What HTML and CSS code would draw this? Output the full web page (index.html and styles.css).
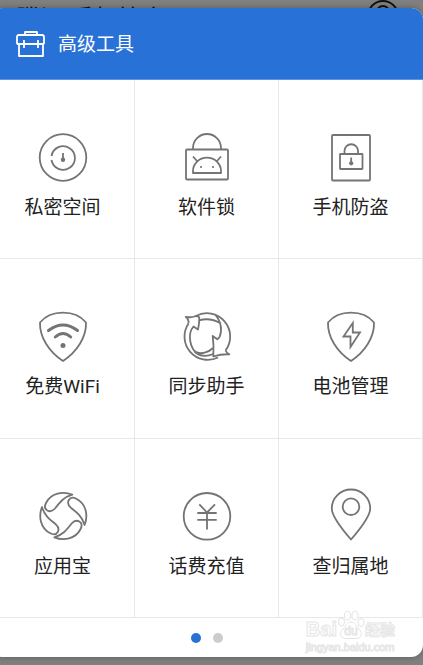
FILE: index.html
```html
<!DOCTYPE html>
<html lang="zh-CN">
<head>
<meta charset="utf-8">
<meta name="viewport" content="width=device-width, initial-scale=1">
<title>高级工具</title>
<link rel="stylesheet" href="styles.css">
</head>
<body>
<div class="backdrop">
  <span>腾讯 手机管家</span>
  <svg class="avatar" viewBox="0 0 32 32" aria-hidden="true"><circle cx="16" cy="16" r="15"/><circle cx="16" cy="12" r="6"/></svg>
</div>
<main class="panel">
  <header class="panel-header">
    <svg class="toolbox" viewBox="0 0 30 28" aria-hidden="true"><path d="M9 5V2H21V5M3 14H1.500L1 13V7Q1 5 3 5H26Q28 5 28 7V13L27.500 14H27M3 14H27V26H3ZM8 10V18M22 10V18"/></svg>
    <h1 class="title">高级工具</h1>
  </header>
  <nav class="grid">
    <a class="tile" href="#space">
      <svg class="icon" viewBox="0 0 56 56" aria-hidden="true"><circle cx="28" cy="28.500" r="23.300"/><path d="M16.500 27A11.800 11.800 0 1 1 16.500 31M28 24V31"/><circle class="solid" cx="28" cy="30.700" r="2.200"/></svg>
      <span class="label">私密空间</span>
    </a>
    <a class="tile" href="#lock">
      <svg class="icon" viewBox="0 0 56 56" aria-hidden="true"><path d="M14 20.500V19A14 14 0 0 1 42 19V20.500"/><rect x="7" y="20.500" width="42" height="30" rx="1"/><path d="M14 44V42A14 13.300 0 0 1 42 42V44ZM14 27.500L18 32M42 27.500L38 32"/><circle class="solid" cx="22" cy="38" r="1.100"/><circle class="solid" cx="34" cy="38" r="1.100"/></svg>
      <span class="label">软件锁</span>
    </a>
    <a class="tile" href="#antitheft">
      <svg class="icon" viewBox="0 0 56 56" aria-hidden="true"><rect x="9" y="6" width="38" height="45.500" rx="1"/><rect x="17" y="25" width="22.500" height="15" rx="0.500"/><path d="M21.500 25V22A6.700 6.700 0 0 1 35 22V25M28.200 28.500V34"/><circle class="solid" cx="28.200" cy="34.300" r="2.100"/></svg>
      <span class="label">手机防盗</span>
    </a>
    <a class="tile" href="#wifi">
      <svg class="icon" viewBox="0 0 56 56" aria-hidden="true"><path d="M28 4.700C38 4.700 46 8.500 51 14.500C51.500 29 42 44 28 53C14 44 4.500 29 5 14.500C10 8.500 18 4.700 28 4.700Z"/><path class="wave" d="M13.500 22.500Q28 11.500 42.500 22.500M20.300 29Q28 22 35.700 29"/><circle class="solid" cx="28" cy="37.500" r="2.500"/></svg>
      <span class="label">免费WiFi</span>
    </a>
    <a class="tile" href="#sync">
      <svg class="icon" viewBox="0 0 56 56" aria-hidden="true"><path d="M16.800 8A23.300 23.300 0 0 1 46.500 42.500M39 49.500A23.300 23.300 0 0 1 9.500 15.500M20.300 12.300C27 10.300 35 11.500 42 15.500M36 6.500C42 13 43.500 22 40.700 28.800M34.300 46C27 49 20 48 15.500 43.500M16 43.500C22 47 30 44 34 40"/><path d="M9.500 15.500Q10 11.500 6.800 8.800Q12 10 16.800 8Q19.500 8 20.300 9.500Q20.300 16 19 21.500L14.500 18.500C8 26 11.500 39 16 43.500M46.500 42.500Q47.500 45 50.300 46.300Q42 46 34.300 48.500Q35 37 33.700 28L38.300 31.300L40.700 28.800"/></svg>
      <span class="label">同步助手</span>
    </a>
    <a class="tile" href="#battery">
      <svg class="icon" viewBox="0 0 56 56" aria-hidden="true"><path d="M28 4.700C38 4.700 46 8.500 51 14.500C51.500 29 42 44 28 53C14 44 4.500 29 5 14.500C10 8.500 18 4.700 28 4.700Z"/><path stroke-linejoin="miter" d="M29.800 15L20.500 28.500H27.500V39L37 24.500H29.800Z"/></svg>
      <span class="label">电池管理</span>
    </a>
    <a class="tile" href="#store">
      <svg class="icon" viewBox="0 0 56 56" aria-hidden="true"><path id="leaf" d="M37.300 6.700C28 3 16 5 11 15C7.500 22 15 26 20 20.500C25 14 29 9 37.300 6.700Z"/><use href="#leaf" transform="rotate(90 28.300 28)"/><use href="#leaf" transform="rotate(180 28.300 28)"/><use href="#leaf" transform="rotate(270 28.300 28)"/></svg>
      <span class="label">应用宝</span>
    </a>
    <a class="tile" href="#topup">
      <svg class="icon" viewBox="0 0 56 56" aria-hidden="true"><circle cx="28" cy="28.300" r="23.300"/><path d="M20.300 16.300L28 24.500L36 16.300M18.300 25H37.700M18.300 31.800H37.700M28 24.500V41.500"/></svg>
      <span class="label">话费充值</span>
    </a>
    <a class="tile" href="#region">
      <svg class="icon" viewBox="0 0 56 56" aria-hidden="true"><path d="M28 51.500Q8.800 29.500 8.800 20.500A19.200 19 0 0 1 47.200 20.500Q47.200 29.500 28 51.500Z"/><circle cx="28" cy="18.700" r="8.300"/></svg>
      <span class="label">查归属地</span>
    </a>
  </nav>
  <footer class="pager">
    <button class="dot active" type="button" aria-label="1"></button>
    <button class="dot" type="button" aria-label="2"></button>
    <div class="watermark">
      <div class="brand">
        <span class="bai">Bai</span>
        <span class="paw">
          <svg viewBox="0 0 28 30" aria-hidden="true"><ellipse cx="4.500" cy="12" rx="3" ry="4"/><ellipse cx="10.500" cy="5.500" rx="3" ry="4.300"/><ellipse cx="18" cy="5.500" rx="3" ry="4.300"/><ellipse cx="24" cy="12.500" rx="3" ry="4"/><path d="M14 12C18 12 19 16 22 19C26 23 25 28 19 28.500H9C3 28 2 23 6 19C9 16 10 12 14 12Z"/></svg>
          <span class="du">du</span>
        </span>
        <span class="jingyan">经验</span>
      </div>
      <div class="site">jingyan.baidu.com</div>
    </div>
  </footer>
</main>
</body>
</html>
```
FILE: styles.css
```css
* {
  box-sizing: border-box;
}

body {
  margin: 0;
  min-height: 100vh;
  overflow-x: hidden;
  background: #808080;
  color: #222;
  font-family: Roboto, "Noto Sans CJK SC", sans-serif;
}

.backdrop {
  position: absolute;
  top: 0;
  left: 0;
  right: 0;
  display: flex;
  justify-content: space-between;
  padding: 0 24px 0 16px;
  color: #111;
  font-size: 24px;
  line-height: 38px;
}

.avatar {
  width: 32px;
  height: 32px;
  fill: none;
  stroke: #111;
  stroke-width: 2;
}

.panel {
  position: relative;
  margin: 8px 0 8px -9px;
  overflow: hidden;
  border-radius: 12px;
  background: #fff;
  box-shadow: 0 0 6px rgba(0, 0, 0, 0.3);
}

.panel-header {
  display: flex;
  align-items: center;
  gap: 12px;
  height: 72px;
  padding-left: 25px;
  border-bottom: 1px solid #5e95e2;
  background: #2871d6;
  color: #fff;
}

.toolbox {
  width: 30px;
  height: 28px;
  fill: none;
  stroke: #fff;
  stroke-width: 1.8;
  stroke-linejoin: round;
}

.title {
  margin: 0;
  padding-top: 2px;
  font-size: 19px;
  font-weight: 400;
  line-height: 28px;
}

.grid {
  display: grid;
  grid-template-columns: repeat(3, 1fr);
  grid-auto-rows: 1fr;
  min-height: 538px;
}

.tile {
  display: flex;
  flex-direction: column;
  align-items: center;
  gap: 9px;
  padding: 49px 0 36px;
  border-right: 1px solid #e8e8e8;
  border-bottom: 1px solid #e8e8e8;
  color: inherit;
  text-decoration: none;
}

.icon {
  width: 56px;
  height: 56px;
  fill: none;
  stroke: #747474;
  stroke-width: 1.8;
  stroke-linejoin: round;
}

.icon .solid {
  fill: #747474;
  stroke: none;
}

.icon .wave {
  stroke-width: 3;
  stroke-linecap: round;
}

.label {
  font-size: 19px;
  line-height: 28px;
}

.pager {
  position: relative;
  display: flex;
  align-items: center;
  justify-content: center;
  gap: 12px;
  height: 39px;
}

.dot {
  width: 10px;
  height: 10px;
  padding: 0;
  border: 0;
  border-radius: 50%;
  background: #ccc;
}

.dot.active {
  background: #2871d6;
}

.watermark {
  position: absolute;
  right: 28px;
  bottom: 3px;
  color: #fff;
  font-family: "Liberation Sans", "Noto Sans CJK SC", sans-serif;
  -webkit-text-stroke: 1px #e6e6e6;
}

.brand {
  display: flex;
  align-items: flex-end;
  height: 30px;
}

.bai {
  font-size: 20px;
  font-weight: 700;
  line-height: 22px;
}

.paw {
  position: relative;
  width: 28px;
  height: 30px;
}

.paw svg {
  width: 28px;
  height: 30px;
  fill: #fff;
  stroke: #e2e2e2;
}

.du {
  position: absolute;
  left: 0;
  right: 0;
  bottom: 2px;
  font-size: 12px;
  line-height: 14px;
  text-align: center;
}

.jingyan {
  font-size: 15px;
  font-weight: 700;
  line-height: 20px;
}

.site {
  font-size: 11px;
  line-height: 14px;
}
```
